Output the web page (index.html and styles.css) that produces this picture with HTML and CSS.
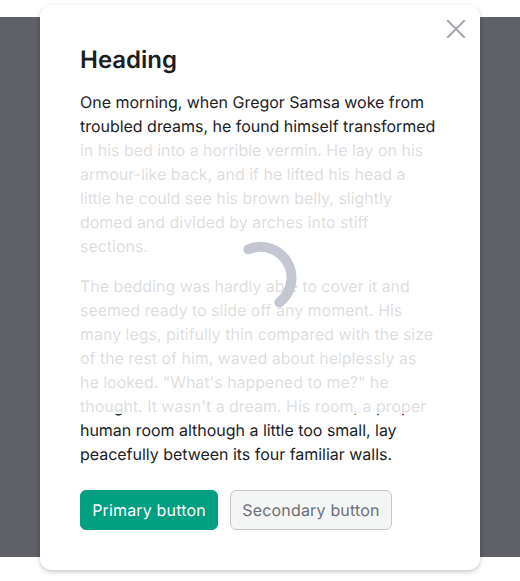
FILE: index.html
```html
<!DOCTYPE html>
<html lang="en">
<head>
<meta charset="utf-8">
<title>Modal</title>
<link rel="stylesheet" href="styles.css">
</head>
<body>
<div class="backdrop"></div>
<section class="modal" role="dialog" aria-labelledby="title">
  <button class="close" aria-label="Close">
    <svg width="20" height="20" viewBox="0 0 20 20"><path d="M1.3 1.3 18.7 18.7M18.7 1.3 1.3 18.7"/></svg>
  </button>
  <h1 id="title">Heading</h1>
  <div class="content">
    <p>One morning, when Gregor Samsa woke from<br>troubled dreams, he found himself transformed<br>in his bed into a horrible vermin. He lay on his<br>armour-like back, and if he lifted his head a<br>little he could see his brown belly, slightly<br>domed and divided by arches into stiff<br>sections.</p>
    <p>The bedding was hardly able to cover it and<br>seemed ready to slide off any moment. His<br>many legs, pitifully thin compared with the size<br>of the rest of him, waved about helplessly as<br>he looked. "What's happened to me?" he<br>thought. It wasn't a dream. His room, a proper<br>human room although a little too small, lay<br>peacefully between its four familiar walls.</p>
    <div class="loading">
      <svg width="72" height="72" viewBox="0 0 72 72"><path d="M24.4 7.3A31 31 0 0 1 55.4 60.4"/></svg>
    </div>
  </div>
  <div class="actions">
    <button class="button primary">Primary button</button>
    <button class="button secondary">Secondary button</button>
  </div>
</section>
</body>
</html>
```

FILE: styles.css
```css
* {
  box-sizing: border-box;
}

body {
  margin: 0;
  height: 581px;
  padding: 5px 40px 0;
  overflow: hidden;
  background: #fff;
  color: #1b1d26;
  font: 400 16px/24px Inter, "Liberation Sans", sans-serif;
  text-rendering: geometricPrecision;
}

.backdrop {
  position: absolute;
  inset: 17px 0 24px;
  background: #5f6066;
}

.modal {
  position: relative;
  height: 565px;
  padding: 38px 40px 40px;
  border-radius: 12px;
  background: #fff;
  box-shadow: 0 2px 5px rgba(0, 0, 0, 0.22);
}

.close {
  position: absolute;
  top: 14px;
  right: 14px;
  display: flex;
  padding: 0;
  border: 0;
  background: none;
}

.close path {
  fill: none;
  stroke: #a4a6ac;
  stroke-width: 2;
}

h1 {
  margin: 0 0 13px;
  font-size: 24px;
  line-height: 34px;
  font-weight: 600;
}

.content {
  position: relative;
}

p {
  margin: 0 0 16px;
  letter-spacing: -0.025px;
  white-space: nowrap;
}

.content p:nth-of-type(2) {
  margin-bottom: 24px;
}

.loading {
  position: absolute;
  inset: 48px 0 52px;
  display: flex;
  align-items: center;
  justify-content: center;
  padding-top: 4px;
  background: rgba(255, 255, 255, 0.85);
}

.loading svg {
  overflow: visible;
}

.loading path {
  fill: none;
  stroke: #c4c7d1;
  stroke-width: 10;
  stroke-linecap: round;
}

.actions {
  display: flex;
  gap: 12px;
}

.button {
  height: 40px;
  padding: 0;
  border: 1px solid;
  border-radius: 6px;
  font: inherit;
  letter-spacing: 0.17px;
  text-rendering: inherit;
}

.primary {
  width: 138px;
  border-color: #009f81;
  background: #009f81;
  color: #fff;
}

.secondary {
  width: 162px;
  border-color: #c5c6d0;
  background: #f4f5f5;
  color: #6d6f76;
}
```
